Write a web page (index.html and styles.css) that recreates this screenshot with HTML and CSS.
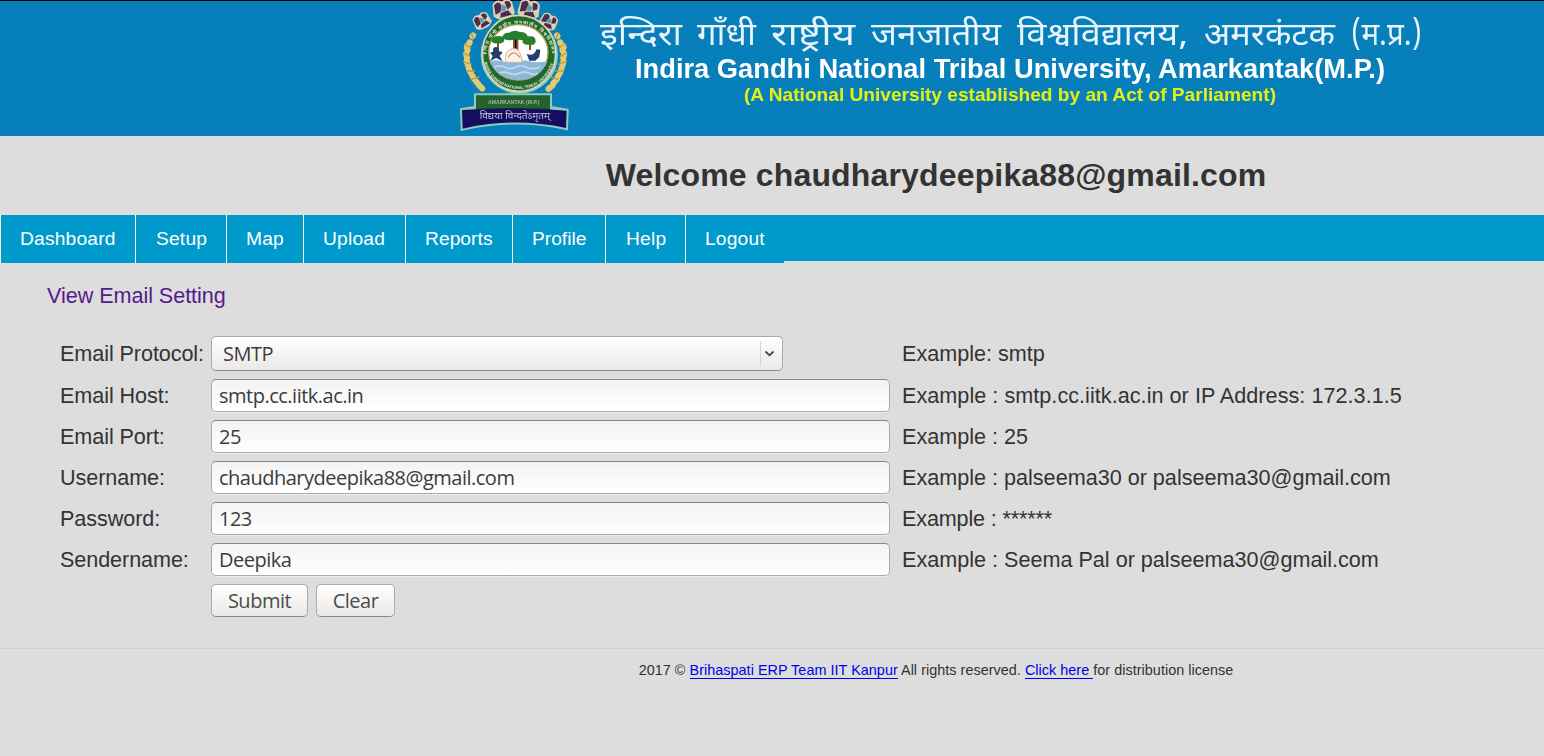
FILE: index.html
```html
<!DOCTYPE html>
<html lang="en">
<head>
<meta charset="utf-8">
<title>Email Setting</title>
<link rel="stylesheet" href="styles.css">
</head>
<body>
<div class="page">
  <header class="banner">
    <svg class="emblem" viewBox="0 0 450 405" width="150" height="135">
      <defs>
        <filter id="soft" x="-5%" y="-5%" width="110%" height="110%"><feGaussianBlur stdDeviation="2"/></filter>
        <path id="ringTop" d="M138 167A99 96 0 0 1 336 167"/>
        <path id="ringBottom" d="M130 165A106 101 0 0 0 344 165"/>
        <g id="lion"><path fill="#dcd3ad" d="M-22-14Q-12-26 0-18Q12-26 22-14L24 12Q13 24 0 21Q-14 24-24 12Z"/><path fill="#4d294f" d="M-19-12Q-8-23-3-11L-7 5-19 9ZM5-16Q20-20 18-4L9 2ZM-7 7L10 4 17 15-10 17Z"/><path fill="#6495b7" d="M-2-11L8-5 3 5-6 3Z"/></g>
      </defs>
      <g filter="url(#soft)">
        <g stroke="#c9edbc" stroke-width="12" opacity=".7"><circle cx="238" cy="165" r="110" fill="none"/><path d="M108 286H330V323L380 332 378 384Q223 350 68 386L66 330 108 323Z"/></g>
        <use href="#lion" transform="translate(126 63) rotate(-28) scale(1.1)"/><use href="#lion" transform="translate(190 28) rotate(-10) scale(1.35)"/><use href="#lion" transform="translate(267 28) rotate(12) scale(1.35)"/><use href="#lion" transform="translate(326 65) rotate(28) scale(1.1)"/>
        <g fill="none" stroke="#dfcb72" stroke-width="18" stroke-linecap="round"><path d="M99 106Q52 190 126 265" stroke-dasharray="3 20"/><path d="M81 138Q67 208 133 272" stroke-dasharray="4 19"/><path d="M351 106Q397 190 330 265" stroke-dasharray="3 20"/><path d="M370 138Q383 208 321 272" stroke-dasharray="4 19"/></g>
        <g fill="none" stroke="#c79a36" stroke-width="4"><path d="M94 100L101 117M73 132L93 143M67 158L91 169M70 185L95 193M78 213L105 213M92 239L118 231M354 100L347 117M375 132L357 143M382 158L360 169M379 185L354 193M370 213L346 213M355 239L333 231"/></g>
        <ellipse cx="237" cy="160" rx="110" ry="114" fill="#23682d" stroke="#d9d7b6" stroke-width="5"/>
        <ellipse cx="235" cy="157" rx="89" ry="83" fill="#fff" stroke="#a7aa55" stroke-width="4"/>
        <path d="M150 184Q168 178 188 184T228 184 268 184 322 184Q301 239 237 240 169 237 150 184Z" fill="#8fb7d9"/>
        <path d="M163 202q16-8 32 0t32 0 32 0 40 0M178 220q15-7 30 0t30 0 30 0 24 0" fill="none" stroke="#c3dbed" stroke-width="5"/>
        <path d="M174 150V128M222 154V113H232V154M270 150V128" stroke="#8d5037" stroke-width="6"/>
        <path d="M155 125Q154 109 170 109 184 106 191 115 197 125 184 130 162 133 155 125M186 113Q190 97 207 98 224 88 239 96 260 95 264 111 252 125 227 118 202 125 186 113M247 124Q251 108 270 109 286 107 287 123 286 138 266 134 249 136 247 124" fill="#28812e"/>
        <path d="M198 187Q190 150 218 146 242 142 247 187Z" fill="#f8f3ea" stroke="#d5b49a" stroke-width="3"/><path d="M205 172Q219 145 240 172" fill="none" stroke="#e38c69" stroke-width="4"/>
        <path d="M150 158Q169 149 188 157L179 168 188 183 168 174 151 183 158 168ZM260 161Q281 172 290 147L301 150 298 171 286 182H268Z" fill="#273d6d"/><circle cx="168" cy="150" r="9" fill="#273d6d"/>
        <text class="ring-hindi"><textPath href="#ringTop" startOffset="4" textLength="296">इन्दिरा गाँधी राष्ट्रीय जनजातीय विश्वविद्यालय</textPath></text>
        <text class="ring-latin"><textPath href="#ringBottom" startOffset="22" textLength="280">INDIRA GANDHI NATIONAL TRIBAL UNIVERSITY</textPath></text>
        <path d="M108 286H330V327H108Z" fill="#26622f"/><text class="town" x="144" y="311" textLength="154">AMARKANTAK (M.P.)</text>
        <path d="M66 330Q225 319 380 332L378 384Q223 350 68 386Z" fill="#150c60"/><path d="M109 326H330V333Q220 323 109 333Z" fill="#0c244c"/>
        <text class="motto" x="119" y="358" textLength="211" lengthAdjust="spacingAndGlyphs">विद्यया विन्दतेऽमृतम्</text>
      </g>
    </svg>
    <svg class="titles" viewBox="0 0 850 135" width="850" height="135">
      <g class="title-hindi">
        <text x="10" y="45" textLength="82" lengthAdjust="spacingAndGlyphs">इन्दिरा</text>
        <text x="107" y="45" textLength="59" lengthAdjust="spacingAndGlyphs">गाँधी</text>
        <text x="181" y="45" textLength="84" lengthAdjust="spacingAndGlyphs">राष्ट्रीय</text>
        <text x="281" y="45" textLength="130" lengthAdjust="spacingAndGlyphs">जनजातीय</text>
        <text x="427" y="45" textLength="171" lengthAdjust="spacingAndGlyphs">विश्वविद्यालय,</text>
        <text x="614" y="45" textLength="131" lengthAdjust="spacingAndGlyphs">अमरकंटक</text>
        <text x="761" y="45" textLength="71" lengthAdjust="spacingAndGlyphs">(म.प्र.)</text>
      </g>
      <text class="title-main" x="45" y="78" textLength="750" lengthAdjust="spacingAndGlyphs">Indira Gandhi National Tribal University, Amarkantak(M.P.)</text>
      <text class="title-sub" x="154" y="101" textLength="532" lengthAdjust="spacingAndGlyphs">(A National University established by an Act of Parliament)</text>
    </svg>
  </header>
  <h1 class="welcome">Welcome chaudharydeepika88@gmail.com</h1>
  <nav class="menu">
    <a>Dashboard</a><a>Setup</a><a>Map</a><a>Upload</a><a>Reports</a><a>Profile</a><a>Help</a><a>Logout</a>
  </nav>
  <main class="content">
    <a class="view-link">View Email Setting</a>
    <form class="settings">
      <label>Email Protocol:</label>
      <div class="select"><span>SMTP</span><span class="arrow"><svg width="11" height="8" viewBox="0 0 11 8"><path d="M1.5 1.5L5.5 5.3L9.5 1.5" fill="none" stroke="#444" stroke-width="1.8"/></svg></span></div>
      <span>Example: smtp</span>
      <label>Email Host:</label><input class="field" value="smtp.cc.iitk.ac.in"><span class="host-hint">Example : smtp.cc.iitk.ac.in or IP Address: 172.3.1.5</span>
      <label>Email Port:</label><input class="field" value="25"><span>Example : 25</span>
      <label>Username:</label><input class="field" value="chaudharydeepika88@gmail.com"><span>Example : palseema30 or palseema30@gmail.com</span>
      <label>Password:</label><input class="field" value="123"><span class="password-hint">Example : ******</span>
      <label>Sendername:</label><input class="field" value="Deepika"><span>Example : Seema Pal or palseema30@gmail.com</span>
      <div class="buttons"><button class="submit" type="button">Submit</button><button class="clear" type="button">Clear</button></div>
    </form>
  </main>
  <footer class="footer">2017 © <a>Brihaspati ERP Team IIT Kanpur</a> All rights reserved. <a>Click here </a>for distribution license</footer>
</div>
</body>
</html>
```
FILE: styles.css
```css
* { box-sizing: border-box; }
body { margin: 0; height: 756px; background: #ddd; color: #333; font-family: "Liberation Sans", sans-serif; }
.banner { display: flex; height: 136px; padding-left: 440px; border-top: 1px solid #000; background: #067fba; }
.emblem, .titles { flex: none; }
.emblem { margin-top: -1px; }
.titles { margin-top: -1px; filter: blur(.45px); }
.ring-hindi { font: bold 14px "Noto Sans Devanagari", sans-serif; fill: #dbe5cf; }
.ring-latin { font: bold 12px "Liberation Sans", sans-serif; fill: #e2ead9; }
.town { font: bold 15px "Liberation Sans", sans-serif; fill: #9fb9a0; }
.motto { font: 28px "Noto Sans Devanagari", sans-serif; fill: #c5c0df; }
.title-hindi { font: 32px "Noto Sans Devanagari", "Lohit Devanagari", sans-serif; fill: #e8f3fa; }
.title-main { font: bold 27.5px "Liberation Sans", sans-serif; fill: #fff; }
.title-sub { font: bold 19px "Liberation Sans", sans-serif; fill: #e6ef14; }
.welcome { height: 79px; margin: 0; padding-left: 328px; font-size: 32px; line-height: 78px; letter-spacing: .16px; text-align: center; }
.menu { display: flex; height: 46px; background: #09c; }
.menu a { flex: none; height: 48px; padding-left: 19px; border-left: 1px solid #fff; background: #09c; color: #fff; font-size: 19.2px; line-height: 48px; letter-spacing: .2px; }
.menu a:nth-child(1) { width: 135px; }
.menu a:nth-child(2) { width: 91px; padding-left: 20px; }
.menu a:nth-child(3) { width: 77px; }
.menu a:nth-child(4) { width: 102px; }
.menu a:nth-child(5) { width: 107px; letter-spacing: .05px; }
.menu a:nth-child(6) { width: 93px; letter-spacing: 0; }
.menu a:nth-child(7) { width: 80px; padding-left: 20px; }
.menu a:nth-child(8) { width: 99px; }
.content { height: 387px; padding: 22px 0 0 47px; font-size: 21.6px; }
.view-link { display: block; height: 53px; line-height: 26px; letter-spacing: -.05px; color: #551a8b; }
.settings { display: grid; grid-template-columns: 151px 679px 1fr; grid-template-rows: 35px repeat(6, 33px); row-gap: 8px; align-items: center; padding-left: 13px; white-space: nowrap; }
.settings label { letter-spacing: -.08px; }
.settings > span { padding-left: 12px; }
.settings .host-hint { letter-spacing: .04px; }
.settings .password-hint { letter-spacing: -.15px; }
.select, .field, .settings button { border: 1px solid #aaa; border-radius: 5px; color: #3c3c3c; font-family: "Open Sans", sans-serif; font-size: 20px; letter-spacing: -.5px; }
.select { display: flex; align-items: center; justify-content: space-between; width: 572px; height: 35px; padding-left: 11px; border-bottom-color: #888; background: linear-gradient(#fff, #ebe9e7); }
.arrow { display: flex; align-items: center; justify-content: center; width: 22px; height: 25px; border-left: 1px solid #d5d5d5; padding-right: 4px; }
.field { width: 679px; height: 33px; padding: 0 7px 1px; border-top-color: #888; background: linear-gradient(#f3f3f3, #fff); box-shadow: 0 1px 0 #eee; }
.buttons { grid-column: 2; display: flex; gap: 8px; }
.settings button { height: 33px; padding: 0 0 1px; border-bottom-color: #888; background: linear-gradient(#fff, #ebe9e7); color: #4c4c4c; }
.settings .submit { width: 97px; }
.settings .clear { width: 79px; }
.footer { height: 50px; padding-left: 328px; border-top: 1px solid #d0d0d0; font-size: 14.4px; line-height: 43px; letter-spacing: .035px; text-align: center; white-space: pre; }
.footer a { color: #00e; border-bottom: 1px solid #00e; }
```
